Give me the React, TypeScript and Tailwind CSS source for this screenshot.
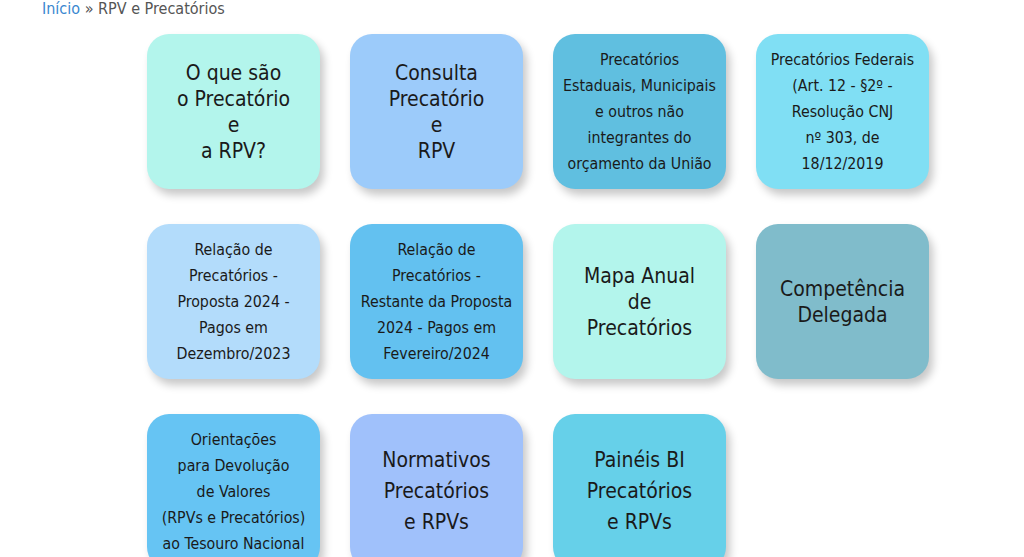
const cards: { lines: string[]; bg: string; big?: boolean; lh?: string }[] = [
  { lines: ["O que são", "o Precatório", "e", "a RPV?"], bg: "bg-[#b3f5ec]", big: true },
  { lines: ["Consulta", "Precatório", "e", "RPV"], bg: "bg-[#9ccbfa]", big: true },
  {
    lines: ["Precatórios", "Estaduais, Municipais", "e outros não", "integrantes do", "orçamento da União"],
    bg: "bg-[#60bfe0]",
  },
  {
    lines: ["Precatórios Federais", "(Art. 12 - §2º -", "Resolução CNJ", "nº 303, de", "18/12/2019"],
    bg: "bg-[#80dff4]",
  },
  {
    lines: ["Relação de", "Precatórios -", "Proposta 2024 -", "Pagos em", "Dezembro/2023"],
    bg: "bg-[#b3dcfb]",
  },
  {
    lines: ["Relação de", "Precatórios -", "Restante da Proposta", "2024 - Pagos em", "Fevereiro/2024"],
    bg: "bg-[#63c1f0]",
  },
  { lines: ["Mapa Anual", "de", "Precatórios"], bg: "bg-[#b3f5ec]", big: true },
  { lines: ["Competência", "Delegada"], bg: "bg-[#80bccb]", big: true },
  {
    lines: ["Orientações", "para Devolução", "de Valores", "(RPVs e Precatórios)", "ao Tesouro Nacional"],
    bg: "bg-[#66c4f3]",
  },
  { lines: ["Normativos", "Precatórios", "e RPVs"], bg: "bg-[#a0c1fb]", big: true, lh: "leading-[31px]" },
  { lines: ["Painéis BI", "Precatórios", "e RPVs"], bg: "bg-[#66d0e9]", big: true, lh: "leading-[31px]" },
];

const Card = ({ lines, bg, big, lh }: { lines: string[]; bg: string; big?: boolean; lh?: string }) => (
  <a
    href="#"
    className={`${bg} w-[173px] h-[155px] rounded-[22px] shadow-[4px_6px_8px_rgba(0,0,0,0.22)] flex flex-col items-center justify-center text-center text-[#1a1a1a] ${
      big ? "text-[21px]" : "text-[15.8px]"
    } ${lh ?? "leading-[26px]"}`}
  >
    {lines.map((l, i) => (
      <span key={i} className="whitespace-nowrap">
        {l}
      </span>
    ))}
  </a>
);

export default function App() {
  return (
    <div
      className="w-[1024px] h-[557px] overflow-hidden bg-white"
      style={{ fontFamily: '"DejaVu Sans Condensed", Tahoma, "DejaVu Sans", sans-serif' }}
    >
      <div className="pl-[42px] text-[16px] leading-[17px] text-[#555]">
        <a href="#" className="text-[#3a87d0]">
          Início
        </a>{" "}
        » RPV e Precatórios
      </div>
      <div className="ml-[147px] mt-[17px] grid grid-cols-[repeat(4,173px)] gap-x-[30px] gap-y-[35px]">
        {cards.map((c, i) => (
          <Card key={i} {...c} />
        ))}
      </div>
    </div>
  );
}
